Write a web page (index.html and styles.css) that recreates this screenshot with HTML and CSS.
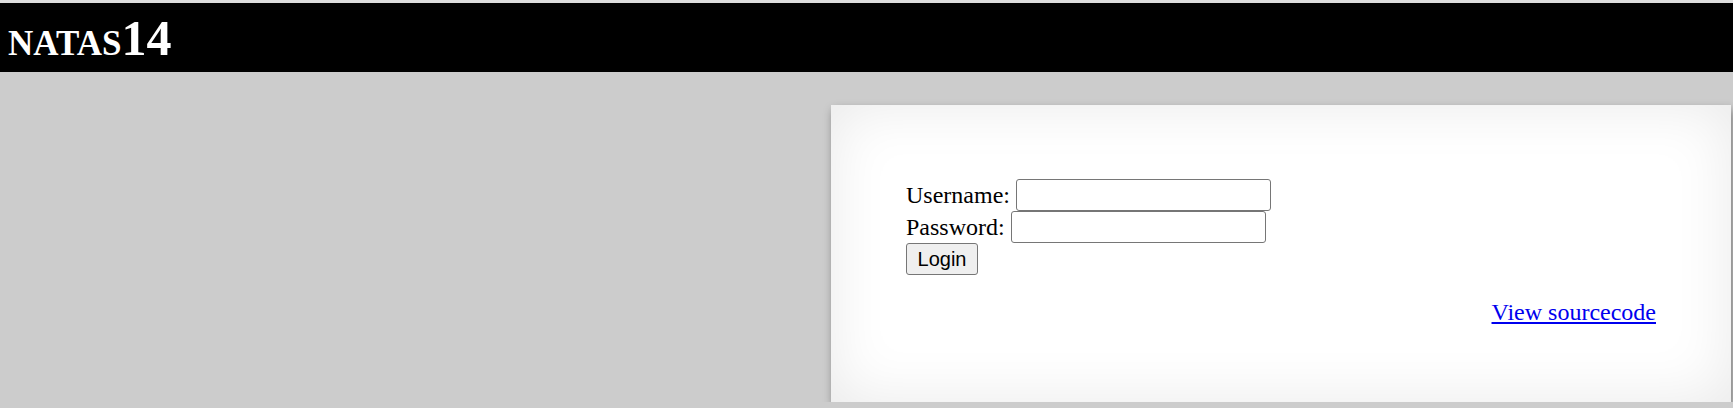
FILE: index.html
```html
<!DOCTYPE html>
<html>
<head>
<meta charset="utf-8">
<title>natas14</title>
<link rel="stylesheet" href="styles.css">
</head>
<body>
<div class="topstrip"></div>
<h1 class="header">natas14</h1>
<div class="content">
<form class="login" action="index.php" method="POST">
<div class="row">Username: <input class="field" name="username"></div>
<div class="row">Password: <input class="field" name="password"></div>
<div class="row"><input class="btn" type="submit" value="Login"></div>
</form>
<div class="viewsource"><a class="srclink" href="index-source.html">View sourcecode</a></div>
</div>
</body>
</html>
```
FILE: styles.css
```css
html, body {
  margin: 0;
  padding: 0;
}
body {
  background: #cccccc;
  font-family: "Liberation Serif", "Times New Roman", serif;
  font-size: 24px;
  color: #000;
  overflow: hidden;
}
.topstrip {
  height: 3px;
  background: #dedede;
}
.header {
  margin: 0;
  background: #000;
  color: #fff;
  height: 69px;
  padding: 1px 0 0 8px;
  box-sizing: border-box;
  font-size: 50px;
  line-height: 68px;
  font-weight: bold;
  font-variant: small-caps;
}
.content {
  width: 900px;
  box-sizing: border-box;
  margin: 33px 2px 0 auto;
  padding: 74px 75px 75px 75px;
  background: #fff;
  box-shadow: inset 0 0 60px rgba(0,0,0,0.09), 2px 5px 9px rgba(0,0,0,0.4);
}
.login {
  margin: 0 0 24px 0;
}
.row {
  height: 32px;
  display: flex;
  align-items: center;
  white-space: pre;
}
.field {
  box-sizing: border-box;
  width: 255px;
  height: 32px;
  margin: 0;
  border: 1px solid #767676;
  border-radius: 3px;
  padding: 1px 3px;
  font-family: "Liberation Sans", Arial, sans-serif;
  font-size: 20px;
  background: #fff;
}
.btn {
  box-sizing: border-box;
  width: 72px;
  height: 32px;
  margin: 0;
  border: 1px solid #767676;
  border-radius: 3px;
  background: #efefef;
  font-family: "Liberation Sans", Arial, sans-serif;
  font-size: 20px;
  color: #000;
  padding: 0;
}
.viewsource {
  text-align: right;
  line-height: 27.6px;
}
.srclink {
  color: #0000ee;
  text-decoration: underline;
}
```
